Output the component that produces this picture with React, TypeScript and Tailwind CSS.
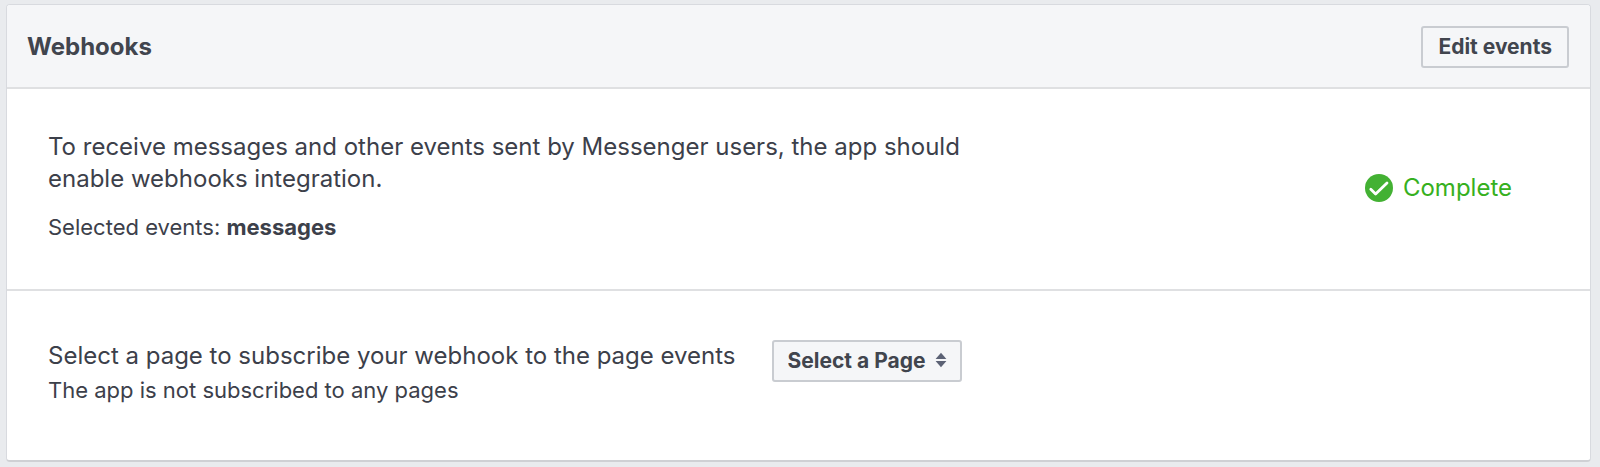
import { useState } from "react"

export default function App() {
  const [page, setPage] = useState("")

  return (
    <main className="min-h-screen bg-[#e9ebee] pt-1 pb-1 pl-1.5 pr-[9px] font-['Inter',sans-serif] text-[#3c404a]">
      <section
        aria-labelledby="webhooks-title"
        className="overflow-hidden rounded border border-b-2 border-[#d8dadf] border-b-[#cfd0d4] bg-white"
      >
        {/* Header */}
        <header className="flex items-center justify-between border-b-2 border-[#dfe0e2] bg-[#f5f6f8] pt-[21px] pb-[19px] pl-5 pr-[21px]">
          <h1 id="webhooks-title" className="text-2xl leading-8 font-bold text-[#41454e]">
            Webhooks
          </h1>
          <button
            type="button"
            className="h-[42px] rounded-[3px] border-2 border-[#c9ccd1] px-[15px] text-[21px] leading-7 font-bold text-[#41454e]"
          >
            Edit events
          </button>
        </header>

        {/* Selected events */}
        <div className="flex items-center justify-between border-b-2 border-[#dfe0e2] pt-[42px] pb-12 pl-[41px] pr-[78px]">
          <div className="max-w-[940px]">
            <p className="text-2xl leading-8">
              To receive messages and other events sent by Messenger users, the app should
              enable webhooks integration.
            </p>
            <p className="mt-[18px] text-[22px] leading-7">
              Selected events: <strong className="font-bold">messages</strong>
            </p>
          </div>
          <p className="flex items-center gap-2.5 pt-1 text-2xl leading-8 text-[#36b020]">
            <CheckIcon />
            Complete
          </p>
        </div>

        {/* Page subscription */}
        <div className="flex items-start gap-9 pt-[49px] pb-14 pl-[41px]">
          <div>
            <label htmlFor="page-select" className="block text-2xl leading-8">
              Select a page to subscribe your webhook to the page events
            </label>
            <p className="mt-1 text-[22px] leading-7">The app is not subscribed to any pages</p>
          </div>
          <div className="relative">
            <select
              id="page-select"
              value={page}
              onChange={(e) => setPage(e.target.value)}
              className="h-[42px] appearance-none rounded-[3px] border-2 border-[#c9ccd1] bg-[#f5f6f8] pl-3.5 pr-[34px] text-[21px] leading-7 font-bold text-[#41454e]"
            >
              <option value="">Select a Page</option>
            </select>
            <SortIcon />
          </div>
        </div>
      </section>
    </main>
  )
}

function CheckIcon() {
  return (
    <svg width="28" height="28" viewBox="0 0 28 28" fill="none" aria-hidden="true">
      <circle cx="14" cy="14" r="14" fill="#43b133" />
      <path d="M5.8 15.2l4.8 4.8L22 8.9" stroke="#fff" strokeWidth="2.8" strokeLinecap="round" strokeLinejoin="round" />
    </svg>
  )
}

function SortIcon() {
  return (
    <svg
      className="pointer-events-none absolute top-3 right-[15px]"
      width="12"
      height="16"
      viewBox="0 0 12 16"
      fill="#5c6275"
      aria-hidden="true"
    >
      <path d="M6 .8L11.4 7H.6z" />
      <path d="M.6 9h10.8L6 15.2z" />
    </svg>
  )
}
